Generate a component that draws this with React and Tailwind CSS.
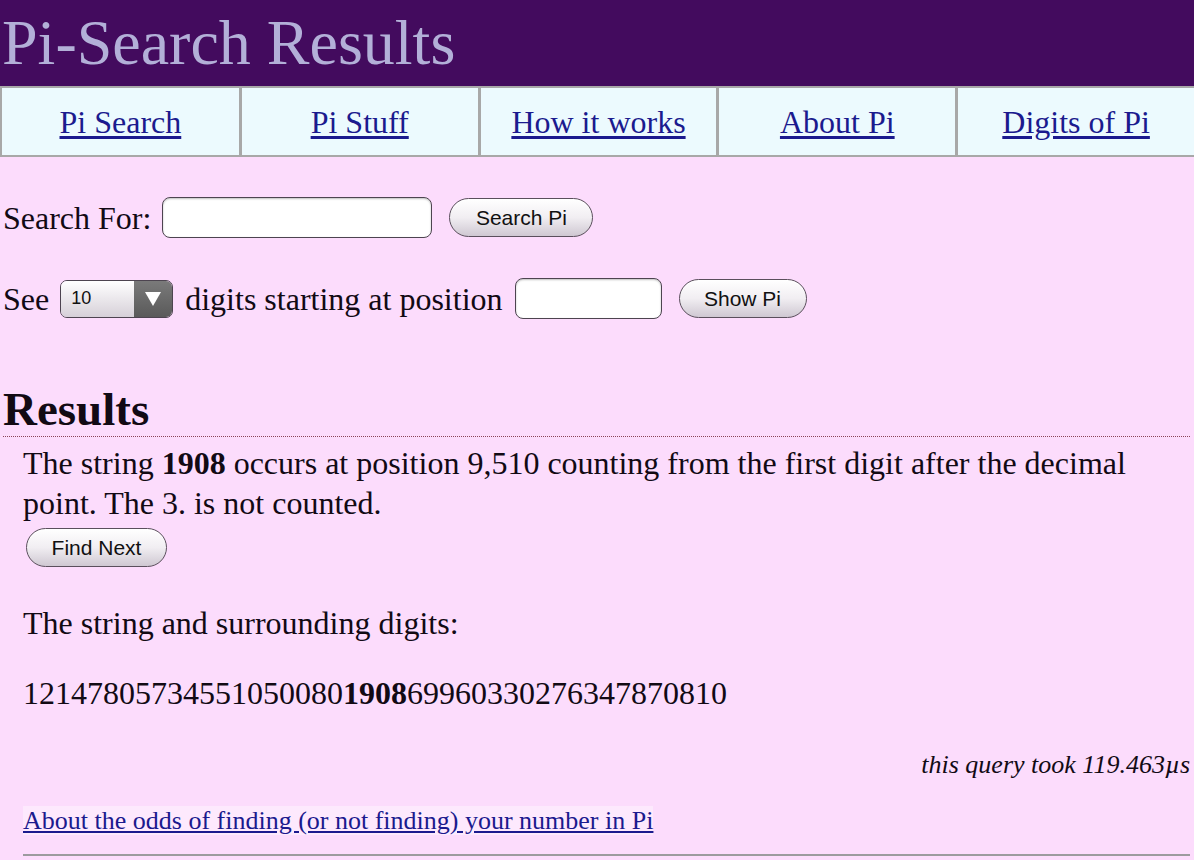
const NAV_LINKS = ["Pi Search", "Pi Stuff", "How it works", "About Pi", "Digits of Pi"];

function PillButton({ children, className = "" }) {
  return (
    <button
      type="button"
      className={`h-[39px] rounded-full border border-[#5a4f5c] bg-gradient-to-b from-white via-[#f1eef2] to-[#cfc8d2] font-['Liberation_Sans',Arial,sans-serif] text-[21px] leading-none text-[#111] shadow-[inset_0_1px_0_#fff] ${className}`}
    >
      {children}
    </button>
  );
}

function TextBox({ width }) {
  return (
    <input
      type="text"
      className={`h-[41px] ${width} rounded-[8px] border border-[#4d4450] bg-white shadow-[inset_0_1px_2px_rgba(0,0,0,0.25)] outline-none`}
    />
  );
}

function DigitSelect() {
  return (
    <div className="flex h-[38px] w-[113px] overflow-hidden rounded-[7px] border border-[#4d4450]">
      <div className="flex flex-1 items-center bg-gradient-to-b from-white to-[#d6d0d8] pl-[10px] font-['Liberation_Sans',Arial,sans-serif] text-[18px] text-[#111]">
        10
      </div>
      <div className="flex w-[38px] items-center justify-center bg-gradient-to-b from-[#7a7a7a] to-[#5a5a5a]">
        <svg width="18" height="16" viewBox="0 0 18 16">
          <path d="M1 1 H17 L9 15 Z" fill="#ffffff" />
        </svg>
      </div>
    </div>
  );
}

export default function App() {
  return (
    <div className="min-h-screen bg-[#fcdcfc] font-['Liberation_Serif','Times_New_Roman',serif] text-[#120a14]">
      <header className="h-[86px] bg-[#430b5e] pl-[2px]">
        <h1 className="text-[64px] leading-[86px] text-[#b3b0d8]">Pi-Search Results</h1>
      </header>

      <nav className="grid grid-cols-5 border-y-[2px] border-[#a8a8a8] bg-[#ecfafe]">
        {NAV_LINKS.map((label, i) => (
          <div
            key={label}
            className={`flex h-[67px] items-center justify-center border-[#a8a8a8] ${i === 0 ? "border-l-[2px]" : "border-l-[3px]"}`}
          >
            <a href="#" className="text-[32px] text-[#1b1a8e] underline underline-offset-[3px]">
              {label}
            </a>
          </div>
        ))}
      </nav>

      <main className="pl-[3px] pr-[4px]">
        <div className="mt-[40px] flex h-[41px] items-center text-[32px]">
          <span>Search For:</span>
          <div className="ml-[11px] flex">
            <TextBox width="w-[270px]" />
          </div>
          <PillButton className="ml-[17px] w-[144px]">Search Pi</PillButton>
        </div>

        <div className="mt-[40px] flex h-[41px] items-center text-[32px]">
          <span>See</span>
          <div className="ml-[11px] flex">
            <DigitSelect />
          </div>
          <span className="ml-[12px]">digits starting at position</span>
          <div className="ml-[12px] flex">
            <TextBox width="w-[147px]" />
          </div>
          <PillButton className="ml-[17px] w-[128px]">Show Pi</PillButton>
        </div>

        <h2 className="mt-[64px] border-b border-dotted border-[#8a4458] text-[47px] font-bold leading-[53px]">
          Results
        </h2>

        <section className="pl-[20px] text-[32px]">
          <p className="mt-[6px] leading-[40px]">
            The string <b>1908</b> occurs at position 9,510 counting from the first digit after the decimal point. The 3. is
            not counted.
          </p>
          <PillButton className="mt-[5px] ml-[3px] block w-[141px]">Find Next</PillButton>

          <p className="mt-[36px] leading-[40px]">The string and surrounding digits:</p>

          <p className="mt-[30px] leading-[40px]">
            12147805734551050080<b>1908</b>69960330276347870810
          </p>

          <p className="mt-[36px] text-right text-[26px] italic leading-[32px]">this query took 119.463µs</p>

          <p className="mt-[24px] text-[26px] leading-[32px]">
            <a href="#" className="bg-[#fde9fd] text-[#1b1a8e] underline underline-offset-[2px]">
              About the odds of finding (or not finding) your number in Pi
            </a>
          </p>

          <hr className="mt-[17px] border-t-[2px] border-[#9c9a9e]" />
        </section>
      </main>
    </div>
  );
}
